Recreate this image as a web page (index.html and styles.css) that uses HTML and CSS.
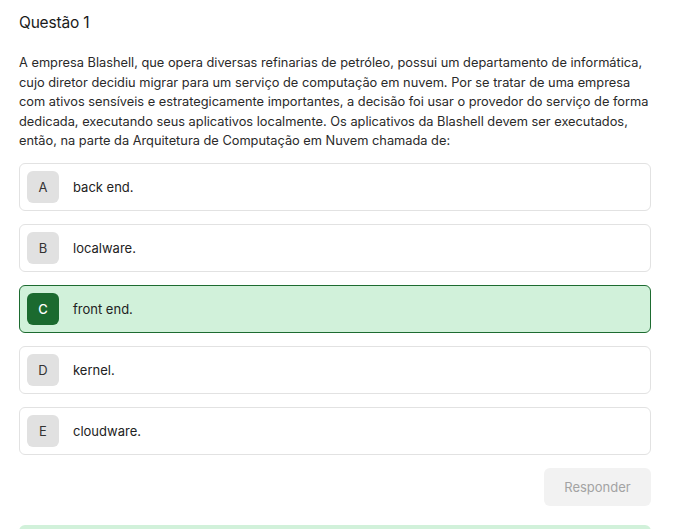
FILE: index.html
```html
<!DOCTYPE html>
<html lang="pt">
<head>
<meta charset="utf-8">
<link rel="stylesheet" href="styles.css">
</head>
<body>
<main class="page">
  <h1 class="title">Questão 1</h1>
  <p class="statement">A empresa Blashell, que opera diversas refinarias de petróleo, possui um departamento de informática, cujo diretor decidiu migrar para um serviço de computação em nuvem. Por se tratar de uma empresa com ativos sensíveis e estrategicamente importantes, a decisão foi usar o provedor do serviço de forma dedicada, executando seus aplicativos localmente. Os aplicativos da Blashell devem ser executados, então, na parte da Arquitetura de Computação em Nuvem chamada de:</p>
  <ul class="options">
    <li class="option"><span class="letter">A</span><span class="label">back end.</span></li>
    <li class="option"><span class="letter">B</span><span class="label">localware.</span></li>
    <li class="option selected"><span class="letter">C</span><span class="label">front end.</span></li>
    <li class="option"><span class="letter">D</span><span class="label">kernel.</span></li>
    <li class="option"><span class="letter">E</span><span class="label">cloudware.</span></li>
  </ul>
  <div class="actions"><button class="submit" disabled>Responder</button></div>
  <div class="feedback"></div>
</main>
</body>
</html>
```
FILE: styles.css
```css
html, body { margin: 0; padding: 0; background: #fff; }
body { font-family: Inter, "Noto Sans", sans-serif; color: #222; }
.page { padding: 12px 38px 0 19px; }
.title { margin: 0; font-size: 15.5px; line-height: 22px; font-weight: 400; color: #1a1a1a; letter-spacing: -0.2px; }
.statement { margin: 19px -4px 0 0; font-size: 12.8px; line-height: 19.5px; color: #2a2a2a; }
.options { list-style: none; margin: 12px 0 0; padding: 0; display: flex; flex-direction: column; gap: 13px; }
.option { display: flex; align-items: center; height: 48px; box-sizing: border-box; border: 1px solid #e2e2e2; border-radius: 6px; padding: 0 7px; background: #fff; }
.letter { width: 32px; height: 32px; border-radius: 6px; background: #e1e1e1; display: flex; align-items: center; justify-content: center; font-size: 13px; color: #333; }
.label { margin-left: 14px; font-size: 13px; color: #222; }
.option.selected { background: #d1f1da; border-color: #1d6b30; }
.option.selected .letter { background: #1b6a2f; color: #fff; font-weight: 500; }
.actions { display: flex; justify-content: flex-end; margin-top: 13px; }
.submit { width: 107px; height: 38px; border: none; border-radius: 6px; background: #f2f2f2; color: #a3a3a3; font-family: inherit; font-size: 13px; }
.feedback { margin-top: 19px; height: 20px; background: #d1f1da; border-radius: 6px 6px 0 0; }
```
